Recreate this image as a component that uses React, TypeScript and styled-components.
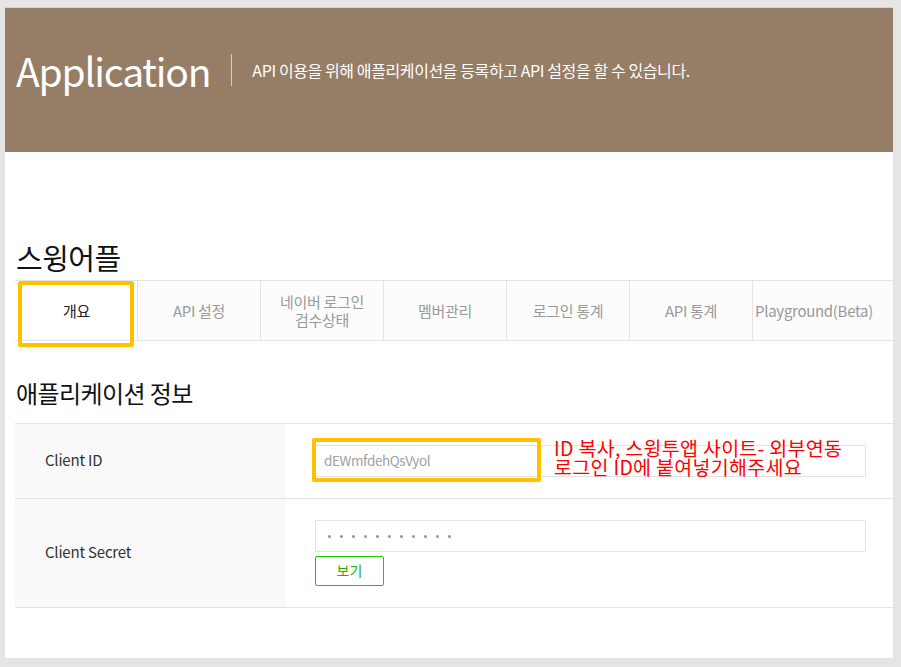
import React from "react";
import styled, { createGlobalStyle } from "styled-components";

const Global = createGlobalStyle`
  html, body { margin: 0; padding: 0; background: #e5e5e4; }
  body { font-family: "Noto Sans CJK KR", "Noto Sans", sans-serif; }
  * { box-sizing: border-box; }
`;

const Frame = styled.div`
  position: relative;
  margin: 7px 0 0 5px;
  width: 888px;
  height: 651px;
  background: #fff;
  border-top: 1px solid #d2d2d2;
  display: flex;
  flex-direction: column;
`;

const Hero = styled.header`
  height: 144px;
  background: #967d65;
  display: flex;
  align-items: center;
  padding: 0 0 20px 11px;
  color: #fff;
`;

const HeroTitle = styled.h1`
  margin: 0;
  font-family: "Noto Sans CJK KR", sans-serif;
  font-weight: 400;
  font-size: 39px;
  letter-spacing: -1.2px;
  line-height: 1;
`;

const HeroDivider = styled.span`
  width: 1px;
  height: 32px;
  background: #d9cdc2;
  margin: 0 20px 0 21px;
`;

const HeroDesc = styled.p`
  margin: 0;
  font-size: 16px;
  letter-spacing: -0.4px;
  line-height: 1;
`;

const Body = styled.main`
  padding: 88px 0 0 10px;
  display: flex;
  flex-direction: column;
`;

const AppName = styled.h2`
  margin: 0 0 6px 1px;
  font-size: 29px;
  font-weight: 400;
  line-height: 34px;
  color: #111;
  letter-spacing: -0.5px;
`;

const Tabs = styled.nav`
  display: grid;
  grid-template-columns: 122px repeat(6, 123px);
  height: 61px;
  border-top: 1px solid #e3e3e3;
  border-bottom: 1px solid #e3e3e3;
  background: #fcfcfc;
`;

const Tab = styled.div<{ $active?: boolean }>`
  display: flex;
  align-items: center;
  justify-content: center;
  text-align: center;
  font-size: 15px;
  line-height: 18px;
  letter-spacing: -0.3px;
  color: ${(p) => (p.$active ? "#222" : "#999")};
  background: ${(p) => (p.$active ? "#fff" : "transparent")};
  border-left: 1px solid ${(p) => (p.$active ? "transparent" : "#e3e3e3")};
`;

const SectionTitle = styled.h3`
  margin: 37px 0 15px 1px;
  font-size: 24px;
  font-weight: 400;
  line-height: 30px;
  color: #111;
  letter-spacing: -0.6px;
`;

const Table = styled.div`
  display: grid;
  grid-template-columns: 270px 1fr;
  border-top: 1px solid #e3e3e3;
`;

const Label = styled.div<{ $h: number }>`
  height: ${(p) => p.$h}px;
  background: #f9f9f9;
  border-bottom: 1px solid #e3e3e3;
  display: flex;
  align-items: center;
  padding: 0 0 4px 30px;
  font-size: 15px;
  color: #333;
  letter-spacing: -0.2px;
`;

const Cell = styled.div<{ $h: number }>`
  height: ${(p) => p.$h}px;
  border-bottom: 1px solid #e3e3e3;
  display: flex;
  flex-direction: column;
  justify-content: center;
  padding: 0 27px 0 30px;
  gap: 4px;
`;

const Field = styled.div`
  height: 32px;
  border: 1px solid #e3e3e3;
  background: #fff;
  display: flex;
  align-items: center;
  padding: 0 0 3px 8px;
  font-size: 13.5px;
  color: #a0a0a0;
  letter-spacing: -0.4px;
`;

const Dots = styled.div`
  display: flex;
  gap: 9px;
  padding: 3px 0 0 4px;
`;

const Dot = styled.span<{ $c: string }>`
  width: 3px;
  height: 3px;
  border-radius: 50%;
  background: ${(p) => p.$c};
`;

const ViewButton = styled.button`
  width: 69px;
  height: 30px;
  border: 1px solid #1ec800;
  border-radius: 2px;
  background: #fff;
  color: #1eb400;
  font-family: "Noto Sans CJK KR", sans-serif;
  font-size: 14px;
  padding: 0 0 2px;
  cursor: pointer;
`;

const Highlight = styled.div<{ $l: number; $t: number; $w: number; $h: number }>`
  position: absolute;
  left: ${(p) => p.$l}px;
  top: ${(p) => p.$t}px;
  width: ${(p) => p.$w}px;
  height: ${(p) => p.$h}px;
  border: 4px solid #ffc000;
  border-radius: 2px;
  pointer-events: none;
`;

const Note = styled.div`
  position: absolute;
  left: 549px;
  top: 430px;
  color: #ff0000;
  font-family: "Noto Sans CJK KR", sans-serif;
  font-weight: 400;
  font-size: 19.5px;
  line-height: 19px;
  letter-spacing: 0.3px;
`;

const tabs = [
  "개요",
  "API 설정",
  "네이버 로그인\n검수상태",
  "멤버관리",
  "로그인 통계",
  "API 통계",
  "Playground(Beta)",
];

const dotColors = ["#a8907a", "#8a96a8", "#a0927f", "#949eac", "#8f8f8f", "#a8927a", "#8a98ac", "#999", "#a8907a", "#909aa8", "#b88a70"];

export default function App() {
  return (
    <>
      <Global />
      <Frame>
        <Hero>
          <HeroTitle>Application</HeroTitle>
          <HeroDivider />
          <HeroDesc>API 이용을 위해 애플리케이션을 등록하고 API 설정을 할 수 있습니다.</HeroDesc>
        </Hero>
        <Body>
          <AppName>스윙어플</AppName>
          <Tabs>
            {tabs.map((t, i) => (
              <Tab key={t} $active={i === 0}>
                {t.split("\n").map((line, j) => (
                  <React.Fragment key={j}>
                    {j > 0 && <br />}
                    {line}
                  </React.Fragment>
                ))}
              </Tab>
            ))}
          </Tabs>
          <SectionTitle>애플리케이션 정보</SectionTitle>
          <Table>
            <Label $h={75}>Client ID</Label>
            <Cell $h={75}>
              <Field>dEWmfdehQsVyol</Field>
            </Cell>
            <Label $h={109}>Client Secret</Label>
            <Cell $h={109}>
              <Field>
                <Dots>
                  {dotColors.map((c, i) => (
                    <Dot key={i} $c={c} />
                  ))}
                </Dots>
              </Field>
              <ViewButton>보기</ViewButton>
            </Cell>
          </Table>
        </Body>
        <Highlight $l={13} $t={273} $w={116} $h={66} />
        <Highlight $l={307} $t={430} $w={229} $h={44} />
        <Note>
          ID 복사, 스윙투앱 사이트- 외부연동
          <br />
          로그인 ID에 붙여넣기해주세요
        </Note>
      </Frame>
    </>
  );
}
